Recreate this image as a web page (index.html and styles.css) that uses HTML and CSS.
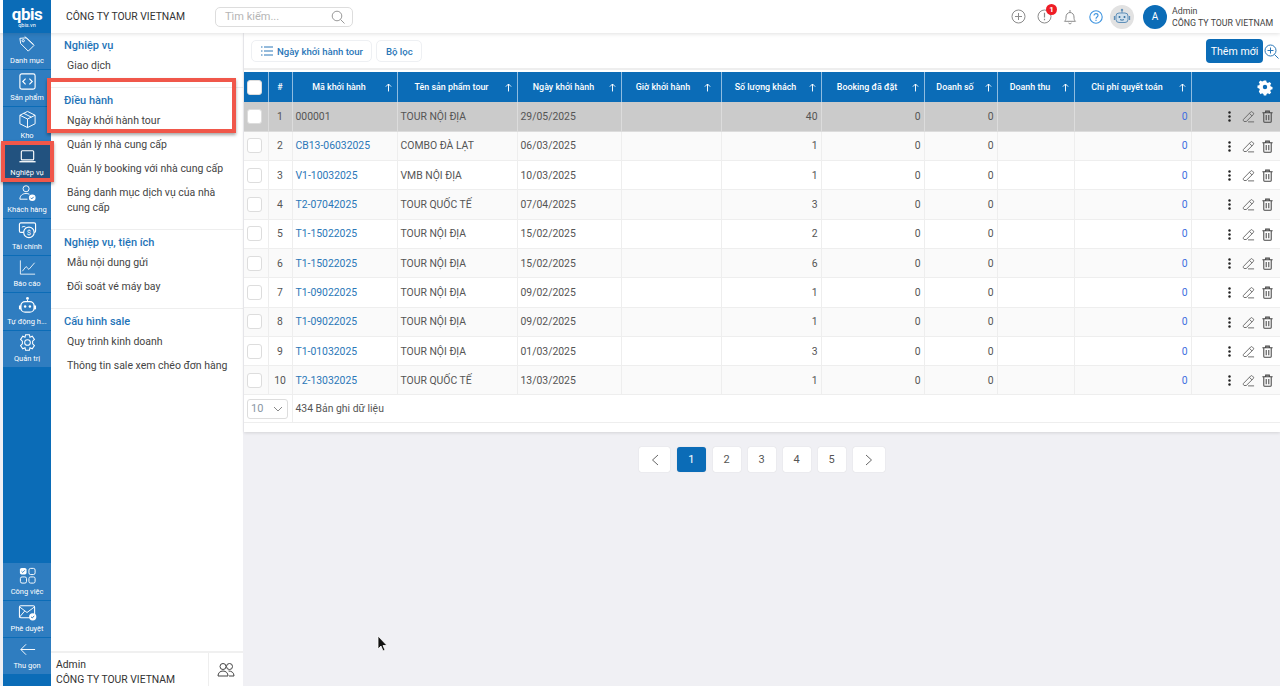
FILE: index.html
```html
<!DOCTYPE html>
<html lang="vi">
<head>
    <meta charset="UTF-8">
    <title>Ngày khởi hành tour</title>
    <link rel="stylesheet" href="styles.css">
</head>
<body>
<svg class="defs" width="0" height="0">
    <symbol id="i-dots" viewBox="0 0 12 16"><circle cx="6" cy="3" r="1.5" fill="currentColor"/><circle cx="6" cy="8" r="1.5" fill="currentColor"/><circle cx="6" cy="13" r="1.5" fill="currentColor"/></symbol>
    <symbol id="i-edit" viewBox="0 0 14 14"><path d="M1.5 10.2 9.3 2.2a1.3 1.3 0 0 1 1.9 0l.9.9a1.3 1.3 0 0 1 0 1.9L4.6 12.4H2.2L1.5 11.6zM8 3.6l2.8 2.8M6.5 12.8h6.5" fill="none" stroke="currentColor" stroke-width="1"/></symbol>
    <symbol id="i-trash" viewBox="0 0 14 14"><path d="M1.5 3h11M5 3V1.2h4V3M3 3v9.3a1 1 0 0 0 1 1h6a1 1 0 0 0 1-1V3M5.6 5.5v5.5M8.4 5.5v5.5" fill="none" stroke="currentColor" stroke-width="1.1"/></symbol>
    <symbol id="i-up" viewBox="0 0 8 10"><path d="M4 9.5V1M1 4l3-3 3 3" fill="none" stroke="currentColor" stroke-width="1.1"/></symbol>
</svg>

<header class="topbar">
    <div class="logo"><span class="logo-name">qbis</span><span class="logo-url">qbis.vn</span></div>
    <div class="company">CÔNG TY TOUR VIETNAM</div>
    <div class="search"><span>Tìm kiếm...</span>
        <svg width="14" height="14" viewBox="0 0 14 14"><circle cx="6" cy="6" r="4.8" fill="none" stroke="#999" stroke-width="1"/><path d="m9.5 9.5 4 4" stroke="#999" stroke-width="1"/></svg>
    </div>
    <div class="top-icons">
        <svg width="15" height="15" viewBox="0 0 15 15"><circle cx="7.5" cy="7.5" r="6.5" fill="none" stroke="#8b8b8b"/><path d="M7.5 4v7M4 7.5h7" stroke="#8b8b8b"/></svg>
        <span class="alert">
            <svg width="15" height="15" viewBox="0 0 15 15"><circle cx="7.5" cy="7.5" r="6.5" fill="none" stroke="#8b8b8b"/><path d="M7.5 3.8v4.6M7.5 9.8v1.4" stroke="#8b8b8b" stroke-width="1.2"/></svg>
            <b class="badge">1</b>
        </span>
        <svg width="14" height="16" viewBox="0 0 14 16"><path d="M1.5 12.3c1.2-1 1.5-2 1.5-4.3 0-2.5 1.6-4.5 4-4.5s4 2 4 4.5c0 2.3.3 3.3 1.5 4.3zM5.5 14c.5 1 2.5 1 3 0M7 1v2.3" fill="none" stroke="#8b8b8b"/></svg>
        <svg class="help" width="14" height="14" viewBox="0 0 14 14"><circle cx="7" cy="7" r="6.2" fill="none" stroke="#3f95e0" stroke-width="1.1"/><path d="M5 5.5C5 3 9 3 9 5.5 9 7 7 7 7 8.7M7 9.8V11" fill="none" stroke="#3f95e0" stroke-width="1.1"/></svg>
        <span class="bot">
            <svg width="18" height="18" viewBox="0 0 18 18"><circle cx="9" cy="2" r="1.2" fill="#5f8fb8"/><path d="M9 3v2" stroke="#5f8fb8"/><rect x="3" y="5" width="12" height="9.5" rx="3" fill="#cfdfec" stroke="#5f8fb8"/><path d="M1.5 8v4M16.5 8v4" stroke="#5f8fb8" stroke-width="1.3"/><circle cx="6.5" cy="9" r="1" fill="#356f9f"/><circle cx="11.5" cy="9" r="1" fill="#356f9f"/><path d="M7 11.5c1 .8 3 .8 4 0" fill="none" stroke="#356f9f"/></svg>
        </span>
    </div>
    <div class="avatar">A</div>
    <div class="account"><div>Admin</div><div>CÔNG TY TOUR VIETNAM</div></div>
</header>

<div class="app">
    <nav class="rail">
        <a class="rail-item">
            <svg viewBox="0 0 20 20"><path d="M2 3.5 2.8 9l8 8 6-6-8-8zM7 1.5l9.5 8.5" fill="none" stroke="currentColor"/><circle cx="5.5" cy="6" r="1.2" fill="none" stroke="currentColor"/></svg>
            <span>Danh mục</span></a>
        <a class="rail-item">
            <svg viewBox="0 0 20 20"><rect x="2" y="2" width="16" height="16" rx="2" fill="none" stroke="currentColor" stroke-width="1.2"/><path d="M8 7 5 10l3 3M12 7l3 3-3 3" fill="none" stroke="currentColor" stroke-width="1.2"/></svg>
            <span>Sản phẩm</span></a>
        <a class="rail-item">
            <svg viewBox="0 0 20 20"><path d="M10 1.5 18 5.5v9l-8 4-8-4v-9zM2 5.5l8 4 8-4M10 9.5v9M6 3.5l8 4" fill="none" stroke="currentColor"/></svg>
            <span>Kho</span></a>
        <a class="rail-item rail-active">
            <svg viewBox="0 0 20 20"><rect x="3.5" y="4" width="13" height="9.5" rx="1" fill="none" stroke="currentColor" stroke-width="1.2"/><path d="M1.5 15.5h17" stroke="currentColor" stroke-width="1.4"/></svg>
            <span>Nghiệp vụ</span></a>
        <a class="rail-item">
            <svg viewBox="0 0 20 20"><circle cx="8.5" cy="5" r="3.2" fill="none" stroke="currentColor"/><path d="M2 16c0-4 3-6 6.5-6 1.5 0 2.5.3 3.5.8M2 16h8" fill="none" stroke="currentColor"/><circle cx="15" cy="14.5" r="3.5" fill="#fff"/><path d="m13.3 14.5 1.2 1.2 2-2.2" fill="none" stroke="#2f7dc0"/></svg>
            <span>Khách hàng</span></a>
        <a class="rail-item">
            <svg viewBox="0 0 20 20"><rect x="1.5" y="2" width="17" height="10" rx="1.5" fill="none" stroke="currentColor" stroke-width="1.2"/><path d="M4 6.5c2-1 3-1 4 0" fill="none" stroke="currentColor"/><circle cx="11.5" cy="12" r="5.5" fill="#2f7dc0" stroke="currentColor" stroke-width="1.2"/><text x="11.5" y="15" class="rail-money">$</text></svg>
            <span>Tài chính</span></a>
        <a class="rail-item">
            <svg viewBox="0 0 20 20"><path d="M2.5 2.5V17H18" fill="none" stroke="currentColor" stroke-width=".9"/><path d="m4.5 14 4-5 3 3 6-7" fill="none" stroke="currentColor" stroke-width=".9"/></svg>
            <span>Báo cáo</span></a>
        <a class="rail-item">
            <svg viewBox="0 0 20 20"><circle cx="10" cy="2.5" r="1.5" fill="currentColor"/><path d="M10 4v2" stroke="currentColor"/><rect x="3" y="6" width="14" height="11" rx="4.5" fill="none" stroke="currentColor" stroke-width="1.4"/><rect x="1" y="10" width="2" height="4" fill="currentColor"/><rect x="17" y="10" width="2" height="4" fill="currentColor"/><circle cx="7.5" cy="11" r="1.3" fill="currentColor"/><circle cx="12.5" cy="11" r="1.3" fill="currentColor"/></svg>
            <span>Tự động h...</span></a>
        <a class="rail-item">
            <svg viewBox="0 0 20 20"><path d="M8 1.8h4l.6 2.6 2.4-1 2.3 3.3-1.9 1.900v2.800l1.900 1.900-2.300 3.300-2.400-1-.6 2.600H8l-.6-2.600-2.400 1-2.300-3.300 1.900-1.900V8.600L2.700 6.700 5 3.400l2.400 1z" fill="none" stroke="currentColor" stroke-width="1.1"/><circle cx="10" cy="10" r="3" fill="none" stroke="currentColor" stroke-width="1.1"/></svg>
            <span>Quản trị</span></a>

        <div class="rail-bottom">
            <a class="rail-item">
                <svg viewBox="0 0 20 20"><rect x="2" y="2" width="7" height="7" rx="1.8" fill="currentColor"/><path d="m3.7 5.5 1.3 1.3 2.2-2.3" fill="none" stroke="#2f7dc0"/><rect x="11.5" y="2.5" width="6.5" height="6.5" rx="1.8" fill="none" stroke="currentColor"/><rect x="2.5" y="11.5" width="6.5" height="6.5" rx="1.8" fill="none" stroke="currentColor"/><rect x="11.5" y="11.5" width="6.5" height="6.5" rx="1.8" fill="none" stroke="currentColor"/></svg>
                <span>Công việc</span></a>
            <a class="rail-item">
                <svg viewBox="0 0 20 20"><rect x="1.5" y="3" width="16" height="12.5" rx="1.5" fill="none" stroke="currentColor" stroke-width="1.1"/><path d="m1.5 4 8 6 8-6M1.5 15 7 8.500" fill="none" stroke="currentColor"/><circle cx="15.5" cy="14.5" r="3.8" fill="#fff"/><path d="m13.7 14.5 1.3 1.3 2.1-2.3" fill="none" stroke="#2f7dc0"/></svg>
                <span>Phê duyệt</span></a>
            <a class="rail-item">
                <svg viewBox="0 0 20 20"><path d="M18 10H3M8.5 4.5 3 10l5.5 5.5" fill="none" stroke="currentColor"/></svg>
                <span>Thu gọn</span></a>
        </div>
    </nav>

    <aside class="menu">
        <div class="menu-body">
            <section class="menu-group">
                <h4>Nghiệp vụ</h4>
                <a>Giao dịch</a>
            </section>
            <section class="menu-group">
                <h4>Điều hành</h4>
                <a>Ngày khởi hành tour</a>
                <a>Quản lý nhà cung cấp</a>
                <a>Quản lý booking với nhà cung cấp</a>
                <a>Bảng danh mục dịch vụ của nhà cung cấp</a>
            </section>
            <section class="menu-group">
                <h4>Nghiệp vụ, tiện ích</h4>
                <a>Mẫu nội dung gửi</a>
                <a>Đối soát vé máy bay</a>
            </section>
            <section class="menu-group">
                <h4>Cấu hình sale</h4>
                <a>Quy trình kinh doanh</a>
                <a>Thông tin sale xem chéo đơn hàng</a>
            </section>
        </div>
        <div class="menu-foot">
            <div class="menu-user"><div>Admin</div><div>CÔNG TY TOUR VIETNAM</div></div>
            <div class="menu-switch">
                <svg width="18" height="16" viewBox="0 0 18 16"><circle cx="6" cy="4.5" r="3" fill="none" stroke="#444"/><circle cx="12.5" cy="4.5" r="3" fill="none" stroke="#444"/><path d="M1 14c0-3 2-5 5-5s5 2 5 5zM11.5 9c3 0 5.5 1.5 5.5 5h-5" fill="none" stroke="#444"/></svg>
            </div>
        </div>
    </aside>

    <main class="content">
        <div class="card">
            <div class="toolbar">
                <button class="tab">
                    <svg width="12" height="10" viewBox="0 0 12 10"><path d="M3 1h9M3 5h9M3 9h9M0 1h1.5M0 5h1.5M0 9h1.5" stroke="#2b77b8"/></svg>
                    Ngày khởi hành tour</button>
                <button class="tab">Bộ lọc</button>
                <button class="add">Thêm mới</button>
                <svg class="zoom" width="15" height="15" viewBox="0 0 15 15"><circle cx="6.5" cy="6.5" r="5.5" fill="none" stroke="#2b77b8"/><path d="M6.5 3.5v6M3.5 6.5h6M10.5 10.5l4 4" stroke="#2b77b8"/></svg>
            </div>
            <table class="grid">
                <colgroup>
                    <col class="c-check"><col class="c-no"><col class="c-code"><col class="c-name"><col class="c-date"><col class="c-time"><col class="c-qty"><col class="c-book"><col class="c-sales"><col class="c-rev"><col class="c-cost"><col>
                </colgroup>
                <thead>
                    <tr>
                        <th><span class="check"></span></th>
                        <th>#</th>
                        <th><div class="th-in"><span>Mã khởi hành</span><svg><use href="#i-up"/></svg></div></th>
                        <th><div class="th-in"><span>Tên sản phẩm tour</span><svg><use href="#i-up"/></svg></div></th>
                        <th><div class="th-in"><span>Ngày khởi hành</span><svg><use href="#i-up"/></svg></div></th>
                        <th><div class="th-in"><span>Giờ khởi hành</span><svg><use href="#i-up"/></svg></div></th>
                        <th><div class="th-in"><span>Số lượng khách</span><svg><use href="#i-up"/></svg></div></th>
                        <th><div class="th-in"><span>Booking đã đặt</span><svg><use href="#i-up"/></svg></div></th>
                        <th><div class="th-in"><span>Doanh số</span><svg><use href="#i-up"/></svg></div></th>
                        <th><div class="th-in"><span>Doanh thu</span><svg><use href="#i-up"/></svg></div></th>
                        <th><div class="th-in"><span>Chi phí quyết toán</span><svg><use href="#i-up"/></svg></div></th>
                        <th class="th-gear">
                            <svg width="14" height="14" viewBox="0 0 14 14"><path fill-rule="evenodd" fill="#fff" d="M5.8.5h2.4l.4 1.8 1.3.6 1.600-1 1.700 1.700-1 1.600.6 1.300 1.700.4v2.400l-1.700.4-.6 1.300 1 1.600-1.700 1.700-1.600-1-1.300.6-.4 1.700H5.800l-.4-1.700-1.300-.6-1.600 1L.8 11.400l1-1.600-.6-1.300L-.5 8V5.600l1.700-.4.6-1.300-1-1.600L2.500.6l1.600 1 1.300-.6zM7 4.800a2.200 2.200 0 1 0 0 4.400 2.200 2.200 0 0 0 0-4.400z"/></svg>
                        </th>
                    </tr>
                </thead>
                <tbody>
                    <tr class="row-on"><td><span class="check"></span></td><td class="no">1</td><td>000001</td><td>TOUR NỘI ĐỊA</td><td>29/05/2025</td><td></td><td class="num">40</td><td class="num">0</td><td class="num">0</td><td></td><td class="num link-num">0</td><td class="acts"><svg class="a-dots"><use href="#i-dots"/></svg><svg class="a-edit"><use href="#i-edit"/></svg><svg class="a-trash"><use href="#i-trash"/></svg></td></tr>
                    <tr><td><span class="check"></span></td><td class="no">2</td><td><a>CB13-06032025</a></td><td>COMBO ĐÀ LẠT</td><td>06/03/2025</td><td></td><td class="num">1</td><td class="num">0</td><td class="num">0</td><td></td><td class="num link-num">0</td><td class="acts"><svg class="a-dots"><use href="#i-dots"/></svg><svg class="a-edit"><use href="#i-edit"/></svg><svg class="a-trash"><use href="#i-trash"/></svg></td></tr>
                    <tr><td><span class="check"></span></td><td class="no">3</td><td><a>V1-10032025</a></td><td>VMB NỘI ĐỊA</td><td>10/03/2025</td><td></td><td class="num">1</td><td class="num">0</td><td class="num">0</td><td></td><td class="num link-num">0</td><td class="acts"><svg class="a-dots"><use href="#i-dots"/></svg><svg class="a-edit"><use href="#i-edit"/></svg><svg class="a-trash"><use href="#i-trash"/></svg></td></tr>
                    <tr><td><span class="check"></span></td><td class="no">4</td><td><a>T2-07042025</a></td><td>TOUR QUỐC TẾ</td><td>07/04/2025</td><td></td><td class="num">3</td><td class="num">0</td><td class="num">0</td><td></td><td class="num link-num">0</td><td class="acts"><svg class="a-dots"><use href="#i-dots"/></svg><svg class="a-edit"><use href="#i-edit"/></svg><svg class="a-trash"><use href="#i-trash"/></svg></td></tr>
                    <tr><td><span class="check"></span></td><td class="no">5</td><td><a>T1-15022025</a></td><td>TOUR NỘI ĐỊA</td><td>15/02/2025</td><td></td><td class="num">2</td><td class="num">0</td><td class="num">0</td><td></td><td class="num link-num">0</td><td class="acts"><svg class="a-dots"><use href="#i-dots"/></svg><svg class="a-edit"><use href="#i-edit"/></svg><svg class="a-trash"><use href="#i-trash"/></svg></td></tr>
                    <tr><td><span class="check"></span></td><td class="no">6</td><td><a>T1-15022025</a></td><td>TOUR NỘI ĐỊA</td><td>15/02/2025</td><td></td><td class="num">6</td><td class="num">0</td><td class="num">0</td><td></td><td class="num link-num">0</td><td class="acts"><svg class="a-dots"><use href="#i-dots"/></svg><svg class="a-edit"><use href="#i-edit"/></svg><svg class="a-trash"><use href="#i-trash"/></svg></td></tr>
                    <tr><td><span class="check"></span></td><td class="no">7</td><td><a>T1-09022025</a></td><td>TOUR NỘI ĐỊA</td><td>09/02/2025</td><td></td><td class="num">1</td><td class="num">0</td><td class="num">0</td><td></td><td class="num link-num">0</td><td class="acts"><svg class="a-dots"><use href="#i-dots"/></svg><svg class="a-edit"><use href="#i-edit"/></svg><svg class="a-trash"><use href="#i-trash"/></svg></td></tr>
                    <tr><td><span class="check"></span></td><td class="no">8</td><td><a>T1-09022025</a></td><td>TOUR NỘI ĐỊA</td><td>09/02/2025</td><td></td><td class="num">1</td><td class="num">0</td><td class="num">0</td><td></td><td class="num link-num">0</td><td class="acts"><svg class="a-dots"><use href="#i-dots"/></svg><svg class="a-edit"><use href="#i-edit"/></svg><svg class="a-trash"><use href="#i-trash"/></svg></td></tr>
                    <tr><td><span class="check"></span></td><td class="no">9</td><td><a>T1-01032025</a></td><td>TOUR NỘI ĐỊA</td><td>01/03/2025</td><td></td><td class="num">3</td><td class="num">0</td><td class="num">0</td><td></td><td class="num link-num">0</td><td class="acts"><svg class="a-dots"><use href="#i-dots"/></svg><svg class="a-edit"><use href="#i-edit"/></svg><svg class="a-trash"><use href="#i-trash"/></svg></td></tr>
                    <tr><td><span class="check"></span></td><td class="no">10</td><td><a>T2-13032025</a></td><td>TOUR QUỐC TẾ</td><td>13/03/2025</td><td></td><td class="num">1</td><td class="num">0</td><td class="num">0</td><td></td><td class="num link-num">0</td><td class="acts"><svg class="a-dots"><use href="#i-dots"/></svg><svg class="a-edit"><use href="#i-edit"/></svg><svg class="a-trash"><use href="#i-trash"/></svg></td></tr>
                </tbody>
                <tfoot>
                    <tr>
                        <td colspan="2"><span class="size">10<svg width="10" height="6" viewBox="0 0 10 6"><path d="m1 1 4 4 4-4" fill="none" stroke="#888"/></svg></span></td>
                        <td colspan="10">434 Bản ghi dữ liệu</td>
                    </tr>
                </tfoot>
            </table>
        </div>
        <div class="pager">
            <a class="pg pg-wide"><svg width="8" height="12" viewBox="0 0 8 12"><path d="M7 1 1.5 6 7 11" fill="none" stroke="#666"/></svg></a>
            <a class="pg pg-on">1</a>
            <a class="pg">2</a>
            <a class="pg">3</a>
            <a class="pg">4</a>
            <a class="pg">5</a>
            <a class="pg pg-next"><svg width="8" height="12" viewBox="0 0 8 12"><path d="m1 1 5.5 5L1 11" fill="none" stroke="#666"/></svg></a>
        </div>
    </main>
</div>

<div class="mark mark-menu"></div>
<div class="mark mark-rail"></div>
<svg class="cursor" width="11" height="17" viewBox="0 0 11 17"><path d="M1 1v13l3-3 2 5 2-1-2-4.5h4z" fill="#111" stroke="#fff" stroke-width=".8"/></svg>
</body>
</html>
```

FILE: styles.css
```css
* { box-sizing: border-box; }
html, body { height: 100%; }
body { margin: 0; overflow: hidden; background: #f0f0f4; font-family: Roboto, "Liberation Sans", sans-serif; font-size: 11px; color: #444; display: flex; flex-direction: column; }
.defs { position: absolute; }

/* top bar */
.topbar { flex: none; height: 33px; padding-left: 3px; background: #fff; display: flex; align-items: center; box-shadow: 0 1px 4px rgba(0,0,0,.12); position: relative; z-index: 2; }
.logo { width: 48px; height: 33px; background: #0b6cb7; color: #fff; display: flex; flex-direction: column; align-items: center; justify-content: center; }
.logo-name { font-size: 17px; line-height: 16px; font-weight: 700; letter-spacing: -.5px; }
.logo-url { font-size: 5.5px; line-height: 6px; }
.company { width: 149px; margin-left: 15px; font-size: 10.35px; color: #333; white-space: nowrap; }
.search { width: 138px; height: 20px; padding: 0 7px 0 9px; border: 1px solid #ddd; border-radius: 5px; color: #b5b5b5; display: flex; align-items: center; justify-content: space-between; }
.top-icons { margin-left: auto; display: flex; align-items: center; gap: 11px; }
.alert { position: relative; display: flex; }
.badge { position: absolute; top: -5px; left: 9px; width: 11px; height: 11px; border-radius: 50%; background: #ee1c25; color: #fff; font-size: 8px; line-height: 11px; text-align: center; }
.help { margin-left: 1px; }
.bot { width: 24px; height: 24px; margin-left: -4px; border-radius: 50%; background: #e2e2e2; display: flex; align-items: center; justify-content: center; }
.avatar { width: 24px; height: 24px; margin-left: 9px; border-radius: 50%; background: #0b6cb7; color: #fff; font-size: 10px; line-height: 24px; text-align: center; }
.account { width: 108px; margin-left: 5px; font-size: 8.8px; line-height: 12px; color: #444; white-space: nowrap; }

.app { flex: 1; min-height: 0; display: flex; padding-left: 3px; }

/* left rail */
.rail { width: 48px; flex: none; padding-bottom: 11px; background: #0b6cb7; display: flex; flex-direction: column; }
.rail-item { height: 36.2px; margin-bottom: 1px; flex: none; background: #2f7dc0; color: #fff; display: flex; flex-direction: column; align-items: center; justify-content: flex-end; padding-bottom: 4px; }
.rail-item svg { width: 19px; height: 19px; margin-bottom: 2px; }
.rail-item span { font-size: 7.5px; line-height: 9px; white-space: nowrap; }
.rail-active { background: #22527f; }
.rail-money { font-size: 8px; fill: currentColor; text-anchor: middle; }
.rail-bottom { margin-top: auto; }

/* second level menu */
.menu { width: 192px; flex: none; background: #fff; display: flex; flex-direction: column; }
.menu-body { flex: 1; min-height: 0; }
.menu-group { padding: 6px 12px 10px 13px; border-bottom: 1px solid #eee; }
.menu-group:last-child { border-bottom: 0; }
.menu-group h4 { margin: 0 0 1px; font-size: 11px; line-height: 13px; font-weight: 500; color: #1f74b8; }
.menu-group a { display: block; padding: 4.5px 0 4.5px 3px; font-size: 10.5px; line-height: 15px; color: #444; }
.menu-foot { height: 35px; flex: none; padding-left: 5px; border-top: 2px solid #f0f0f0; display: flex; color: #333; }
.menu-user { flex: 1; padding-top: 4px; font-size: 10.35px; line-height: 15px; white-space: nowrap; }
.menu-switch { width: 35px; border-left: 1px solid #eee; display: flex; align-items: center; justify-content: center; }

/* main */
.content { flex: 1; min-width: 0; padding-left: 1px; }
.card { background: #fff; padding-bottom: 9px; box-shadow: 0 1px 3px rgba(0,0,0,.12); }
.toolbar { height: 37px; padding: 1px 0 0 7px; border-bottom: 2px solid #eee; display: flex; align-items: center; }
.tab { height: 22px; padding: 0 8px 0 9px; border: 1px solid #eef0f3; border-radius: 5px; background: #fff; color: #2b77b8; font: 500 9.6px Roboto, sans-serif; display: flex; align-items: center; gap: 4px; }
.tab + .tab { margin-left: 4px; }
.add { height: 24px; width: 57px; margin-left: auto; padding: 0; border: 0; border-radius: 4px; background: #0b6cb7; color: #fff; font: 10.6px Roboto, sans-serif; }
.zoom { margin: 0 1px; }

.grid { width: 100%; table-layout: fixed; border-collapse: collapse; margin-top: 2px; }
.c-check { width: 24px; }
.c-no { width: 24px; }
.c-code { width: 105px; }
.c-name { width: 120px; }
.c-date { width: 104px; }
.c-time { width: 100px; }
.c-qty { width: 100px; }
.c-book { width: 103px; }
.c-sales { width: 73px; }
.c-rev { width: 77px; }
.c-cost { width: 117px; }
.grid th { height: 30px; padding: 0; border-right: 1px solid #8fbce0; background: #0b6cb7; color: #fff; font-size: 8.9px; font-weight: 500; }
.grid th:last-child { border-right: 0; }
.grid th:first-child { padding-left: 3px; }
.th-in { padding: 0 5px 0 4px; display: flex; align-items: center; justify-content: space-between; }
.th-in span { flex: 1; padding-right: 3px; text-align: center; white-space: nowrap; }
.th-in svg { width: 7px; height: 9px; flex: none; }
.grid th:nth-child(6) .th-in { padding-right: 10px; }
.th-gear { padding-right: 8px !important; }
.th-gear svg { display: block; margin-left: auto; overflow: visible; }
.grid td { height: 29.3px; padding: 0 3px; border-right: 1px solid #eee; border-bottom: 1px solid #eee; color: #555; font-size: 10.4px; white-space: nowrap; }
.grid td:last-child { border-right: 0; }
.grid tbody tr:nth-child(even) { background: #fafafa; }
.grid tbody .row-on { background: #cbcbcb; }
.row-on td { border-color: #dcdcdc; }
.grid a { color: #2b77b8; }
.check { display: block; width: 15px; height: 15px; border: 1px solid #ddd; border-radius: 3px; background: #fff; }
.no { text-align: center; }
.grid .num { text-align: right; padding-right: 3px; }
.grid .link-num { color: #3e6fe0; }
.acts { text-align: right; }
.grid .acts { padding-right: 6px; }
.acts svg { width: 13px; height: 13px; vertical-align: middle; margin-left: 6px; }
.a-dots { color: #222; }
.a-edit { color: #666; }
.a-trash { color: #444; }
.grid tfoot td { height: 28px; padding-left: 3px; }
.size { width: 41px; height: 20px; padding: 0 4px 0 3px; border: 1px solid #ddd; border-radius: 3px; color: #8a97a5; font-size: 11px; display: flex; align-items: center; justify-content: space-between; }

.pager { margin-top: 15px; padding-left: 395px; display: flex; gap: 7px; }
.pg { width: 28px; height: 25px; border-radius: 2px; background: #fff; color: #555; font-size: 11px; display: flex; align-items: center; justify-content: center; box-shadow: 0 0 1px rgba(0,0,0,.2); }
.pg-wide { width: 31px; }
.pg-next { width: 32px; }
.pg-on { width: 28.5px; background: #0b6cb7; color: #fff; border-radius: 3px; }

/* red marks drawn over the screenshot */
.mark { position: absolute; border: 4px solid #f0574a; box-shadow: 0 2px 3px rgba(0,0,0,.35); }
.mark-menu { left: 47px; top: 78px; width: 189px; height: 55px; }
.mark-rail { left: 1px; top: 141px; width: 53px; height: 41px; }
.cursor { position: absolute; left: 377px; top: 635px; }
```
